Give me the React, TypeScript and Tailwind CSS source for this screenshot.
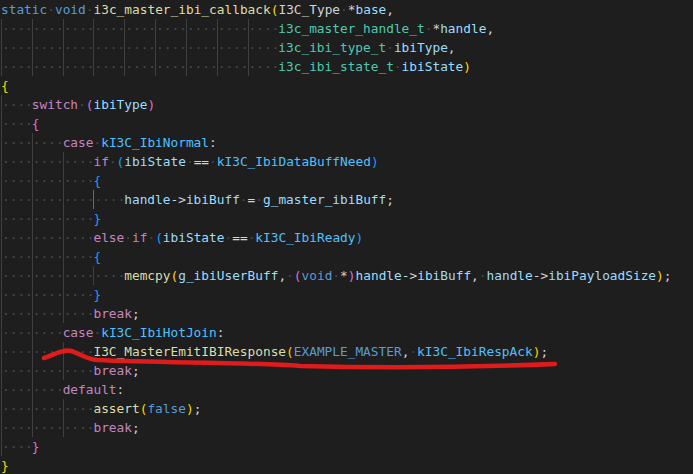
import React from 'react';

// token colour keys (VS Code Dark+ with bracket pair colours)
const C: Record<string, string> = {
  k: 'text-[#569cd6]',
  c: 'text-[#c586c0]',
  f: 'text-[#dcdcaa]',
  v: 'text-[#9cdcfe]',
  t: 'text-[#4ec9b0]',
  e: 'text-[#4fc1ff]',
  p: 'text-[#d4d4d4]',
  g: 'text-[#ffd700]',
  o: 'text-[#da70d6]',
  b: 'text-[#179fff]',
};

type Tok = [string, string];
type Line = { indent: number; toks: Tok[]; active?: number };

const lines: Line[] = [
  { indent: 0, toks: [['static', 'k'], [' ', 'p'], ['void', 'k'], [' ', 'p'], ['i3c_master_ibi_callback', 'f'], ['(', 'g'], ['I3C_Type', 'p'], [' *', 'p'], ['base', 'v'], [',', 'p']] },
  { indent: 9, toks: [['i3c_master_handle_t', 't'], [' *', 'p'], ['handle', 'v'], [',', 'p']] },
  { indent: 9, toks: [['i3c_ibi_type_t', 't'], [' ', 'p'], ['ibiType', 'v'], [',', 'p']] },
  { indent: 9, toks: [['i3c_ibi_state_t', 't'], [' ', 'p'], ['ibiState', 'v'], [')', 'g']] },
  { indent: 0, toks: [['{', 'g']] },
  { indent: 1, toks: [['switch', 'c'], [' ', 'p'], ['(', 'o'], ['ibiType', 'v'], [')', 'o']] },
  { indent: 1, toks: [['{', 'o']] },
  { indent: 2, toks: [['case', 'c'], [' ', 'p'], ['kI3C_IbiNormal', 'e'], [':', 'p']] },
  { indent: 3, toks: [['if', 'c'], [' ', 'p'], ['(', 'b'], ['ibiState', 'v'], [' == ', 'p'], ['kI3C_IbiDataBuffNeed', 'e'], [')', 'b']] },
  { indent: 3, toks: [['{', 'b']] },
  { indent: 4, active: 3, toks: [['handle', 'v'], ['->', 'p'], ['ibiBuff', 'v'], [' = ', 'p'], ['g_master_ibiBuff', 'v'], [';', 'p']] },
  { indent: 3, toks: [['}', 'b']] },
  { indent: 3, toks: [['else', 'c'], [' ', 'p'], ['if', 'c'], [' ', 'p'], ['(', 'b'], ['ibiState', 'v'], [' == ', 'p'], ['kI3C_IbiReady', 'e'], [')', 'b']] },
  { indent: 3, toks: [['{', 'b']] },
  { indent: 4, toks: [['memcpy', 'f'], ['(', 'g'], ['g_ibiUserBuff', 'v'], [', ', 'p'], ['(', 'o'], ['void', 'k'], [' *', 'p'], [')', 'o'], ['handle', 'v'], ['->', 'p'], ['ibiBuff', 'v'], [', ', 'p'], ['handle', 'v'], ['->', 'p'], ['ibiPayloadSize', 'v'], [')', 'g'], [';', 'p']] },
  { indent: 3, toks: [['}', 'b']] },
  { indent: 3, toks: [['break', 'c'], [';', 'p']] },
  { indent: 2, toks: [['case', 'c'], [' ', 'p'], ['kI3C_IbiHotJoin', 'e'], [':', 'p']] },
  { indent: 3, toks: [['I3C_MasterEmitIBIResponse', 'f'], ['(', 'g'], ['EXAMPLE_MASTER', 'k'], [', ', 'p'], ['kI3C_IbiRespAck', 'e'], [')', 'g'], [';', 'p']] },
  { indent: 3, toks: [['break', 'c'], [';', 'p']] },
  { indent: 2, toks: [['default', 'c'], [':', 'p']] },
  { indent: 3, toks: [['assert', 'f'], ['(', 'g'], ['false', 'k'], [')', 'g'], [';', 'p']] },
  { indent: 3, toks: [['break', 'c'], [';', 'p']] },
  { indent: 1, toks: [['}', 'o']] },
  { indent: 0, toks: [['}', 'g']] },
];

function Token({ text, kind }: { text: string; kind: string }) {
  const parts = text.split(/( )/).filter((s) => s !== '');
  return (
    <>
      {parts.map((s, i) =>
        s === ' ' ? (
          <span key={i} className="text-[#4a4a4a]">·</span>
        ) : (
          <span key={i} className={C[kind]}>{s}</span>
        )
      )}
    </>
  );
}

function CodeLine({ line }: { line: Line }) {
  return (
    <div className="flex h-[19px] leading-[19px] whitespace-pre">
      {Array.from({ length: line.indent }).map((_, i) => (
        <span
          key={i}
          className={
            'w-[4ch] shrink-0 border-l text-[#4a4a4a] ' +
            (line.active === i ? 'border-[#6b6b6b]' : 'border-[#404040]')
          }
        >
          ····
        </span>
      ))}
      <span>
        {line.toks.map(([text, kind], i) => (
          <Token key={i} text={text} kind={kind} />
        ))}
      </span>
    </div>
  );
}

export default function App() {
  return (
    <div className="relative w-[693px] h-[474px] overflow-hidden bg-[#1e1e1e] pl-[1px] font-['DejaVu_Sans_Mono',monospace] text-[12.8px]">
      {lines.map((line, i) => (
        <CodeLine key={i} line={line} />
      ))}

      {/* red pen underline */}
      <svg className="absolute left-0 top-0 pointer-events-none" width="693" height="474">
        <path
          d="M44 358 C 54 355, 62 349, 71 351 C 79 353, 86 359, 97 360 C 160 363, 250 362, 300 366 C 380 368, 480 367, 555 364"
          fill="none"
          stroke="#e01b1b"
          strokeWidth="4.5"
          strokeLinecap="round"
          strokeLinejoin="round"
        />
      </svg>
    </div>
  );
}
